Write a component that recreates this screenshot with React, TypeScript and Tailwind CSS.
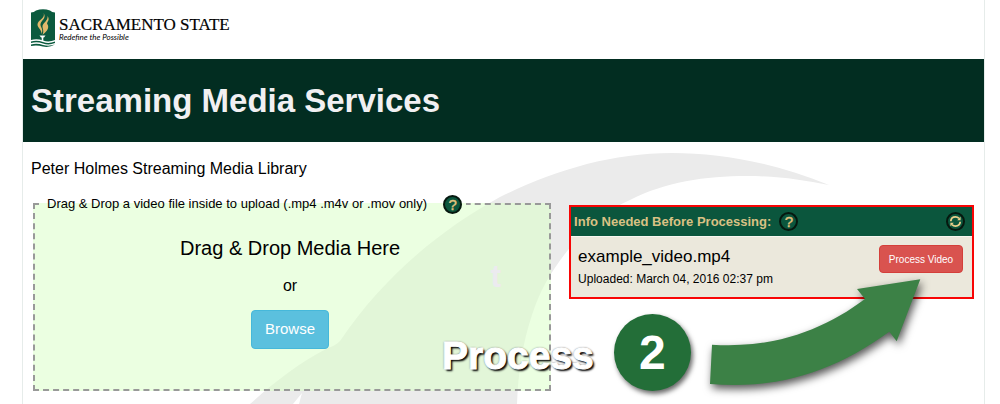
import React from "react";

function Watermark() {
  return (
    <svg
      className="pointer-events-none absolute top-0 left-0 h-[404px] w-[1000px]"
      viewBox="0 0 1000 404"
      aria-hidden="true"
    >
      <path
        d="M829 185C775 163 722 153 672 153C610 153 553 171 500 197C445 227 385 274 340 341Q335 346 328 348C300 362 272 384 250 404H293L302 393L299 404H517C518 372 523 342 532 315C540 290 552 270 568 250C590 224 610 208 630 200C665 182 705 176 747 176C778 176 803 180 829 185Z"
        fill="#ebebeb"
      />
    </svg>
  );
}

function Logo() {
  return (
    <a href="#home" className="flex items-center gap-1 text-black">
      <svg className="h-[38px] w-[24px]" viewBox="0 0 24 38" aria-hidden="true">
        <path d="M0 3.500Q3 3.500 5 1.500Q12 -1 19 1.500Q21 3.500 24 3.500V31Q18 33.500 12 31.500Q6 29.500 0 31Z" fill="#0b5a3e" />
        <path d="M0 32.500Q6 31 12 33Q18 35 24 32.500V34Q18 36.500 12 34.500Q6 32.500 0 34Z" fill="#0b5a3e" />
        <path d="M0 35.500Q6 34 12 36Q18 37.500 24 35.500Q18 39 12 37.500Q6 36 0 37Z" fill="#0b5a3e" />
        <path
          d="M12.500 4C15 9 6.500 11 6.500 15.500C6.500 19 10.500 20 10.500 25C13 20 9 18 9.500 15C10.500 11 16 9 12.500 4Z"
          fill="#e2b96c"
        />
        <path
          d="M16.500 7C17.500 12 11 14 11.500 18C12 21 13 22 11.500 26C15 23 18 20 17 16.500C16.500 15 15.500 15 16.500 13C18 11 18 9 16.500 7Z"
          fill="#e2b96c"
        />
        <path d="M8.500 26.500H14.500L13 28.500H12.300V32H10.700V28.500H10Z" fill="#fff" />
      </svg>
      <span className="flex flex-col pt-[2px]">
        <span className="font-['Liberation_Serif',serif] text-[17px] leading-[16px] [-webkit-text-stroke:0.2px_#111]">
          SACRAMENTO STATE
        </span>
        <span className="font-[Lato,sans-serif] text-[8px] leading-[9px] italic">
          Redefine the Possible
        </span>
      </span>
    </a>
  );
}

function HelpButton({ label }: { label: string }) {
  return (
    <button
      type="button"
      aria-label={label}
      className="flex size-[19px] items-center justify-center rounded-full border-2 border-[#06180f] bg-[#0b563d] text-[15px] leading-none text-[#e3c37f] [-webkit-text-stroke:0.4px_#e3c37f]"
    >
      ?
    </button>
  );
}

function UploadBox() {
  return (
    <fieldset className="relative min-w-0 border-2 border-dashed border-[#999] bg-[#dbffc98f] pr-3 pb-10 pl-2 text-center">
      <legend className="flex items-center gap-4 px-1 text-left text-[13px] leading-[20px]">
        <span>Drag &amp; Drop a video file inside to upload (.mp4 .m4v or .mov only)</span>
        <HelpButton label="Upload help" />
      </legend>
      <p className="mt-5 text-[20px] leading-[28px]">Drag &amp; Drop Media Here</p>
      <p className="mt-3 text-[16px] leading-[24px]">or</p>
      <button
        type="button"
        className="mt-3 h-[39px] rounded border border-[#46b8da] bg-[#5bc0de] px-[13px] text-[15px] text-white"
      >
        Browse
      </button>
      <span className="absolute top-[46px] right-[48px] text-[32px] leading-none font-bold text-[#ecebef]">
        t
      </span>
    </fieldset>
  );
}

function ProcessingPanel() {
  return (
    <section className="mt-[11px] self-start border-2 border-[#f80505] bg-[#ebe8dc]">
      <header className="flex h-[30px] items-center gap-2 border-b border-[#f7f7f0] bg-[#0b563d] px-[3px] text-[#d9c184]">
        <h2 className="text-[13px] leading-[20px] font-bold">Info Needed Before Processing:</h2>
        <HelpButton label="Processing help" />
        <button
          type="button"
          aria-label="Refresh"
          className="mr-1 ml-auto flex size-[19px] items-center justify-center rounded-full border-2 border-[#06180f]"
        >
          <svg className="size-[13px]" viewBox="0 0 13 13" aria-hidden="true">
            <path d="M1.800 6.200C2 3.500 4 1.900 6.500 1.900Q8.500 1.900 10 3.400M11.200 6.800C11 9.500 9 11.100 6.500 11.100Q4.500 11.100 3 9.600" fill="none" stroke="#ecd08c" strokeWidth="1.800" />
            <path d="M11.600 1.800V5.200H8.200ZM1.400 11.200V7.800H4.800Z" fill="#ecd08c" />
          </svg>
        </button>
      </header>
      <div className="flex items-start justify-between px-[7px] pt-2 pb-2">
        <div>
          <h3 className="text-[17px] leading-[24px]">example_video.mp4</h3>
          <p className="text-[12px] leading-[20px]">Uploaded: March 04, 2016 02:37 pm</p>
        </div>
        <button
          type="button"
          className="mr-[2px] h-[28px] w-[84px] rounded border border-[#d43f3a] bg-[#d9534f] text-[10px] text-white"
        >
          Process Video
        </button>
      </div>
    </section>
  );
}

function Callout() {
  return (
    <div className="pointer-events-none absolute top-[273px] left-[442px] flex">
      <strong className="mt-[61px] text-[39px] leading-[44px] text-white [-webkit-text-stroke:1px_#fff] [text-shadow:2px_2px_2px_#000,0_0_2px_#333]">
        Process
      </strong>
      <span className="mt-[41px] ml-5 flex size-[77px] items-center justify-center rounded-full bg-[#236e38] text-[48px] font-bold text-white shadow-[2px_3px_5px_#0009]">
        2
      </span>
      <svg className="ml-[9px] h-[131px] w-[240px]" viewBox="700 273 240 131" aria-hidden="true">
        <path
          d="M712 344.700C777 349 826 328 865 299L857 289L920.300 279.300L896.700 341.300L889.300 331.700C835 371 778 390 710 384Z"
          fill="#3c8146"
          className="[filter:drop-shadow(2px_4px_4px_#000a)]"
        />
      </svg>
    </div>
  );
}

export default function App() {
  return (
    <div className="relative min-h-screen overflow-hidden bg-white pr-[15px] pl-[22px] font-['Liberation_Sans',Arial,sans-serif] text-black">
      <Watermark />
      <div className="relative min-h-screen border-x border-[#e6ecea]">
        <header className="flex h-[59px] items-start px-2 pt-[9px]">
          <Logo />
        </header>
        <div className="flex h-[83px] items-center bg-[#022d21] px-2">
          <h1 className="text-[33px] leading-[40px] font-bold text-[#f1f0f2]">Streaming Media Services</h1>
        </div>
        <main className="px-[10px] pt-[15px]">
          <p className="-ml-[2px] text-[16px] leading-[24px]">Peter Holmes Streaming Media Library</p>
          <div className="mt-[13px] grid grid-cols-[517fr_404fr] gap-[18px]">
            <UploadBox />
            <ProcessingPanel />
          </div>
        </main>
      </div>
      <Callout />
    </div>
  );
}
